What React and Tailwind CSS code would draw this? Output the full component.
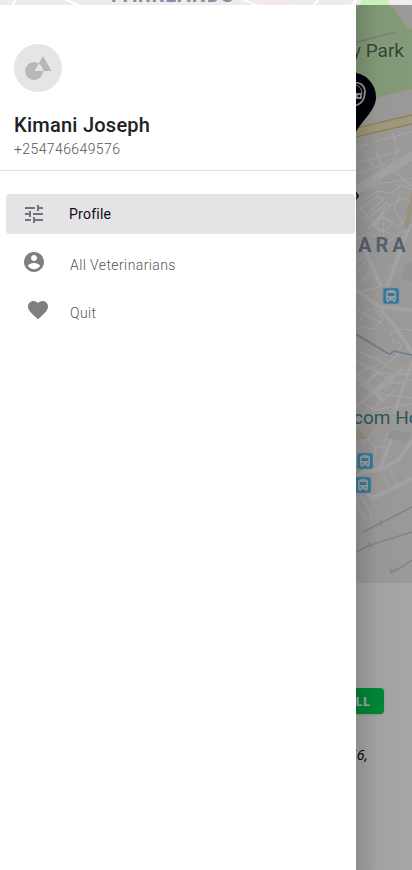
import React from "react";

function BusStop({ x, y }) {
  return (
    <g transform={`translate(${x} ${y})`}>
      <rect width="16" height="16" rx="2" fill="#52bdf5" stroke="#bfe0ef" strokeWidth="0.6" />
      <path d="M3 4.500Q3 2 8 2T13 4.500V12.500h-1V14h-2v-1.500H6V14H4v-1.500H3Z" fill="#f2f2f2" />
      <path d="M4.500 5h7v3h-7zM4.500 10H6v1.300H4.500zM10 10h1.500v1.300H10z" fill="#52bdf5" />
    </g>
  );
}

function StreetMap() {
  return (
    <svg viewBox="0 0 412 583" className="block w-full" aria-label="Map">
      <rect width="412" height="583" fill="#efedeb" />
      <path d="M262 0h33l-8 5h-22z" fill="#f6e6e5" />
      <g stroke="#fff" strokeWidth="2" fill="none">
        <path d="M16 -2L12 8M60 -3L82 7M240 -2L262 8M322 -4L311 8M358 -3L350 8" />
      </g>
      <path d="M362 0h26l3 6 17 22 4 1v60l-13 3-24 6-19 4V12l3-7z" fill="#caefb8" />
      <path d="M352 44l6-2 37-10" stroke="#cdbfc9" strokeWidth="1.6" fill="none" />

      <g fill="none" stroke="#ffffff" strokeWidth="1.1">
        <path d="M356 148l13-4M373 142l39-10M391 128l6 22" />
        <path d="M356 163l34-9 12-4M364 150l10 19M376 153l10 22M356 174l30-10M398 150l-8 18M390 168l22 18" />
        <path d="M358 193l22-10 12-1 20-4M362 200l16-9 14 2 9-8 11 4M357 212l20-16 7 3-22 20M364 222l22-19 5 2-20 20M391 205l12-7 9 4M376 225l9-19M401 191l-7 17 12 20M358 204l18 24 26 10M368 229l15-12 15 10 8-10" />
        <path d="M374 221q10-7 17 1 0 7-9 9-8-2-8-10M384 214l-1 24M404 230l-16 12-20-9-12 6M356 262l15-11M358 272l12-17M356 286l18-20M362 282l14-12M358 293l30-9" />
        <path d="M357 310l26 14M359 326l15 3 9-10-8-10M360 320l9-11M412 330l-14-1-7 5 2 7 8 3-1 6" />
        <path d="M357 351l24 10 15 11 16-2M356 361l20 10 18 12 18-3M358 373l16-7M364 386l36-34M356 372l24 22 32 4M357 388l19-15 36 1M369 395l22-20h18M378 400l13-17 17 1M356 407l38-28M374 408l21-18M362 402l12 8 38-6" />
        <path d="M361 430l15 18 12-2M376 430l-14 15M376 448l-3 16M388 434l-6 14 7 9M394 431l-14 37M382 473l8 16M389 468l10 20M360 494l12 22-7 4-11-22M356 502l6-4" />
      </g>
      <g fill="none" stroke="#fbfbfb">
        <path d="M354 191l60-36" strokeWidth="8" />
        <path d="M361 242l20 44M410 224l-24 66" strokeWidth="4" />
        <path d="M354 288l24 18 18 22 18 28M378 307l34 3" strokeWidth="4" />
        <path d="M356 377l28 24M412 362l-18 52M356 407l48-40" strokeWidth="3" />
        <path d="M395 430l-15 38M358 473l24-4 16-9 14-19M357 482l15 16 28-13 12-7" strokeWidth="4" />
      </g>
      <path d="M412 192l-9 35 5 2 4-17z" fill="#eddfc9" />
      <path d="M405 264l7-2v20l-10-4zM387 438l4-8 21 2-5 10z" fill="#e3e4e7" />
      <path d="M356 430h5l7 9h-12zM356 465l7 5-7 4z" fill="#eae0c8" />
      <path d="M354 333l33 20 3 1 4-3 18 4" fill="none" stroke="#9cc3e2" strokeWidth="1.5" />
      <path d="M354 133l60-14" stroke="#e0bd76" strokeWidth="10" />
      <path d="M354 133l60-14" stroke="#f6ebc0" strokeWidth="7.5" />
      <path d="M363 532l18-9 31-16M354 553l16-8q20-6 42-13M391 572l11-5 10-7M380 520l2 6M369 542l2 5M390 569l2 5" fill="none" stroke="#c8cbd1" strokeWidth="1.5" />

      <g className="font-['Roboto',sans-serif]">
        <text x="111" y="2" className="text-[20px] font-bold tracking-wider" fill="#8090ae">PARKLANDS</text>
        <text x="404" y="57" textAnchor="end" className="text-[19px]" fill="#43793a" stroke="#d9edcf" strokeWidth="3" paintOrder="stroke">City Park</text>
        <text x="358" y="252" className="text-[20px] font-bold tracking-[0.2em]" fill="#8394ad">ARA</text>
        <text x="353" y="424" className="text-[19px]" fill="#42888c">com Hospital</text>
      </g>
      <BusStop x={383} y={288} />
      <BusStop x={357} y={453} />
      <BusStop x={355} y={477} />

      <path d="M350 139C348 130 327 116 327 97a24.500 24.500 0 0 1 49 0C376 110 364 118 356 132z" fill="#00000d" />
      <g fill="none" stroke="#ededf1" strokeWidth="1.8">
        <path d="M352 83q12-2 13 9l-1 6q-2 6-10 8" />
        <path d="M356 85q6 2 6 9" strokeWidth="1" />
        <path d="M350 94h6v4h-6M357 94h4v4h-4z" />
      </g>
      <path d="M354 190l4 6-4 5" fill="none" stroke="#242d37" strokeWidth="2" />
    </svg>
  );
}

function AvatarArt() {
  return (
    <svg viewBox="0 0 48 48" className="size-12" aria-hidden="true">
      <circle cx="24" cy="24" r="24" fill="#e5e5e5" />
      <path
        fillRule="evenodd"
        fill="#b8b8b8"
        d="M20 18a9 9 0 1 0 0 18a9 9 0 1 0 0-18ZM29 12L37.500 27H20.500Z"
      />
    </svg>
  );
}

const icons = {
  tune: "M3 17v2h6v-2H3zM3 5v2h10V5H3zm10 16v-2h8v-2h-8v-2h-2v6h2zM7 9v2H3v2h4v2h2V9H7zm14 4v-2H11v2h10zm-6-4h2V7h4V5h-4V3h-2v6z",
  account:
    "M12 2C6.480 2 2 6.480 2 12s4.480 10 10 10 10-4.480 10-10S17.520 2 12 2zm0 3c1.660 0 3 1.340 3 3s-1.340 3-3 3-3-1.340-3-3 1.340-3 3-3zm0 14.200c-2.500 0-4.710-1.280-6-3.220.030-1.990 4-3.080 6-3.080 1.990 0 5.970 1.090 6 3.080-1.290 1.940-3.500 3.220-6 3.220z",
  heart:
    "M12 21.350l-1.450-1.320C5.400 15.360 2 12.280 2 8.500 2 5.420 4.420 3 7.500 3c1.740 0 3.410.810 4.500 2.090C13.090 3.810 14.760 3 16.500 3 19.580 3 22 5.420 22 8.500c0 3.780-3.400 6.860-8.550 11.540L12 21.350z",
};

function Icon({ name, className }) {
  return (
    <svg viewBox="0 0 24 24" className={`size-6 shrink-0 ${className}`} fill="currentColor" aria-hidden="true">
      <path d={icons[name]} />
    </svg>
  );
}

function Drawer() {
  return (
    <aside className="absolute top-[5px] bottom-0 left-0 w-[calc(100%-56px)] bg-white">
      <header className="border-b border-[#e1e1e1] px-3.5 pt-[39px] pb-[11px]">
        <AvatarArt />
        <h1 className="mt-[19px] text-xl leading-7 font-medium tracking-[0.25px] text-[#212121]">Kimani Joseph</h1>
        <p className="text-sm leading-5 font-light tracking-[0.4px] text-[#555]">+254746649576</p>
      </header>
      <nav className="mt-[23px] pr-px pl-1.5 text-sm text-[#555]">
        <a href="#profile" aria-current="page" className="flex h-10 items-center rounded bg-[#e4e4e6] pl-4 text-[#0c0820]">
          <Icon name="tune" className="text-[#74727e]" />
          <span className="ml-[23px] tracking-[0.25px]">Profile</span>
        </a>
        <a href="#veterinarians" className="mt-4 flex h-8 items-start pl-4 font-light">
          <Icon name="account" className="text-[#7f7f7f]" />
          <span className="ml-6 pt-[5px] tracking-[0.4px]">All Veterinarians</span>
        </a>
        <a href="#quit" className="mt-4 flex h-8 items-start pl-5 font-light">
          <Icon name="heart" className="text-[#7f7f7f]" />
          <span className="ml-5 pt-[5px] tracking-[0.4px]">Quit</span>
        </a>
      </nav>
    </aside>
  );
}

export default function App() {
  return (
    <div className="relative flex min-h-screen flex-col overflow-hidden bg-white font-['Roboto',sans-serif]">
      <StreetMap />
      <section className="flex flex-1 flex-col items-end pt-[105px]">
        <button type="button" className="mr-7 h-[26px] rounded-sm bg-[#03cf55] px-3.5 pt-0.5 font-['Open_Sans',sans-serif] text-[13px] font-bold text-white shadow">
          CALL
        </button>
        <p className="mt-[31px] mr-11 font-['Open_Sans',sans-serif] text-sm text-black italic">Nairobi 56,</p>
      </section>
      <div className="absolute inset-x-0 top-[5px] bottom-0 bg-black/35" />
      <div className="absolute top-[5px] right-0 bottom-0 w-14 bg-linear-to-r from-black/15 via-black/2 via-40% to-transparent" />
      <Drawer />
    </div>
  );
}
